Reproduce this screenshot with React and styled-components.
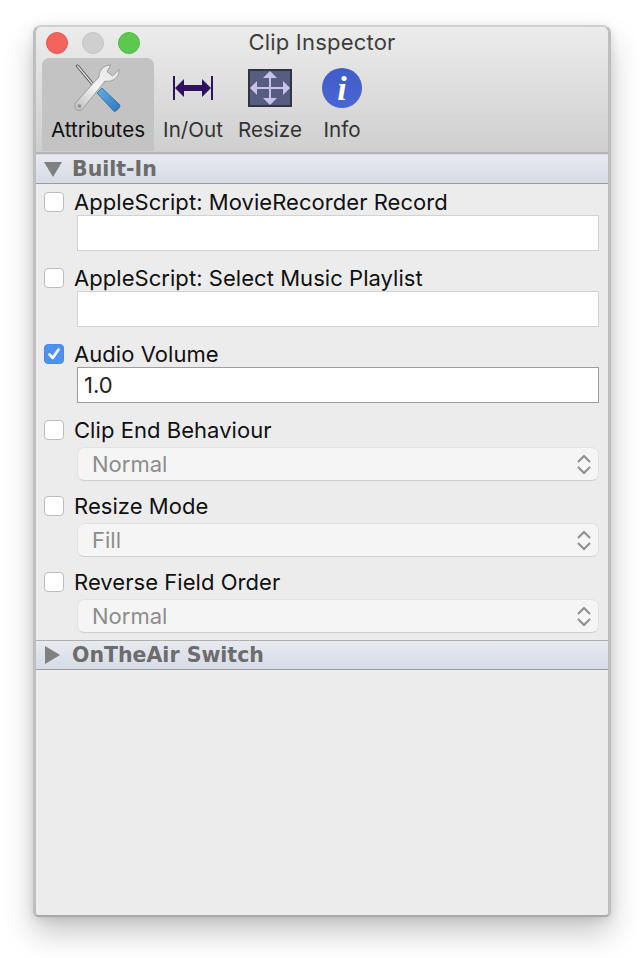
import React from 'react';
import styled, { createGlobalStyle } from 'styled-components';

const GlobalStyle = createGlobalStyle`
	html, body {
		margin: 0;
		padding: 0;
		background: #fff;
	}
`

const Page = styled.div`
	width: 644px;
	height: 958px;
	padding: 25px 33px 41px;
	box-sizing: border-box;
	font-family: Inter, "Liberation Sans", sans-serif;
	overflow: hidden;
`

const Window = styled.div`
	height: 100%;
	display: flex;
	flex-direction: column;
	box-sizing: border-box;
	background: #ececec;
	border: 3px solid #bebebe;
	border-top: 2px solid #d0d0d0;
	border-bottom: 2px solid #a8a8a8;
	border-radius: 8px 8px 5px 5px;
	box-shadow: 0 16px 30px rgba(0, 0, 0, 0.22), 0 2px 10px rgba(0, 0, 0, 0.1);
	overflow: hidden;
`

const Chrome = styled.div`
	height: 125px;
	flex: none;
	background: linear-gradient(#ececec, #cfcfcf);
	border-bottom: 2px solid #b4b4b4;
`

const TitleBar = styled.div`
	height: 31px;
	display: grid;
	grid-template-columns: 1fr auto 1fr;
	align-items: center;
	padding: 0 8px;
`

const Lights = styled.div`
	display: flex;
	gap: 14px;
	padding-left: 2px;
	padding-top: 1px;
`

const Light = styled.span`
	width: 22px;
	height: 22px;
	box-sizing: border-box;
	border-radius: 50%;
	background: ${props => props.color};
	border: 1px solid ${props => props.edge};
`

const Title = styled.div`
	font-size: 22px;
	letter-spacing: 0.2px;
	color: #3e3e3e;
	padding-bottom: 2px;
`

const Toolbar = styled.div`
	display: flex;
	padding-left: 6px;
`

const Tab = styled.div`
	width: ${props => props.size}px;
	height: 93px;
	padding-top: 6px;
	box-sizing: border-box;
	display: flex;
	flex-direction: column;
	align-items: center;
	border-radius: 7px 7px 0 0;
	background: ${props => props.active ? '#c3c3c3' : 'transparent'};
`

const TabIcon = styled.div`
	height: 48px;
	display: flex;
	align-items: center;
	justify-content: center;
`

const TabLabel = styled.div`
	margin-top: 5px;
	line-height: 26px;
	font-size: 20.6px;
	white-space: nowrap;
	color: ${props => props.active ? '#111' : '#333'};
`

const SectionHeader = styled.div`
	height: 30px;
	flex: none;
	box-sizing: border-box;
	display: flex;
	align-items: center;
	gap: 10px;
	padding-left: 8px;
	background: linear-gradient(#e8eaf0, #d6dbe6);
	border-top: 1px solid ${props => props.first ? '#d8dbe3' : '#b0b0b0'};
	border-bottom: 1px solid #9c9c9c;
	font-family: "DejaVu Sans", sans-serif;
	font-weight: bold;
	font-size: 20.5px;
	color: #6c6c6c;
`

const Rows = styled.div`
	padding-top: 5px;
`

const Row = styled.div`
	height: 76px;
	padding: 0 9px 0 9px;
	&:last-child {
		height: 71px;
	}
`

const RowLabel = styled.div`
	height: 26px;
	margin-left: -1px;
	display: flex;
	align-items: center;
	gap: 10px;
	font-size: 22px;
	letter-spacing: 0.05px;
	color: #111;
`

const Check = styled.span`
	width: 20px;
	height: 20px;
	flex: none;
	box-sizing: border-box;
	display: flex;
	align-items: center;
	justify-content: center;
	border-radius: 4px;
	background: ${props => props.checked ? '#4d92f2' : '#fff'};
	border: 1px solid ${props => props.checked ? '#4a8ae6' : '#bdbdbd'};
`

const TextField = styled.input`
	display: block;
	width: 522px;
	height: 36px;
	margin-left: 32px;
	padding: 0 6px;
	box-sizing: border-box;
	background: #fff;
	border: 1px solid ${props => props.filled ? '#9d9d9d' : '#d2d2d2'};
	outline: none;
	font-family: inherit;
	font-size: 22px;
	color: #222;
`

const SelectBox = styled.div`
	width: 522px;
	height: 34px;
	margin: 4px 0 0 32px;
	padding: 0 7px 0 14px;
	box-sizing: border-box;
	display: flex;
	align-items: center;
	justify-content: space-between;
	background: #f5f5f5;
	border: 1px solid #e2e2e2;
	border-bottom-color: #cfcfcf;
	border-radius: 7px;
	font-size: 22px;
	color: #8d8d8d;
`

const Tools = () => (
	<svg width="48" height="48" viewBox="0 0 48 48">
		<defs>
			<linearGradient id="steel" x1="0" y1="1" x2="1" y2="0">
				<stop offset="0" stopColor="#bdbdbd" />
				<stop offset="0.5" stopColor="#f4f4f4" />
				<stop offset="1" stopColor="#e2e2e2" />
			</linearGradient>
			<linearGradient id="grip" x1="0" y1="0" x2="1" y2="1">
				<stop offset="0" stopColor="#64aee6" />
				<stop offset="1" stopColor="#2f77b8" />
			</linearGradient>
		</defs>
		<path d="M3.500 2 L21 23" stroke="#4c4c4c" strokeWidth="3" strokeLinecap="round" />
		<path d="M3.500 2 L21 23" stroke="#e8e8e8" strokeWidth="1.200" strokeLinecap="round" />
		<path d="M23 29 L28 24 L46 41 C46 44 43 47 40 47.500 Z" fill="url(#grip)" stroke="#2e6ea8" strokeWidth="0.800" />
		<path
			d="M1.500 39 L19 19.500 L25 13 C25 8 28 3 33 1.500 L37 1 L33 7.500 L38.500 12 L45 5.500 C45.500 9 44 13 40 15.500 C37 17.500 34 17.500 31 17 L9 44.500 C7 47 3 47 1.500 44.500 C0.500 43 0.500 40.500 1.500 39 Z"
			fill="url(#steel)"
			stroke="#909090"
			strokeWidth="0.800"
		/>
		<circle cx="5.500" cy="42" r="1.800" fill="#8e8e8e" />
	</svg>
)

const InOut = () => (
	<svg width="40" height="24" viewBox="0 0 40 24" fill="#2f1160">
		<rect x="0" y="0" width="2" height="24" />
		<rect x="38" y="0" width="2" height="24" />
		<path d="M2 12 L11 3 V9 H29 V3 L38 12 L29 21 V15 H11 V21 Z" />
	</svg>
)

const Resize = () => (
	<svg width="44" height="38" viewBox="0 0 44 38">
		<rect x="1" y="1" width="42" height="36" fill="#565c82" stroke="#31353f" strokeWidth="2" />
		<g fill="#c9c2ea">
			<rect x="21" y="7" width="2" height="24" />
			<rect x="8" y="18" width="28" height="2" />
			<path d="M22 2 L29 9 H15 Z" />
			<path d="M22 36 L29 29 H15 Z" />
			<path d="M2 19 L9 12 V26 Z" />
			<path d="M42 19 L35 12 V26 Z" />
		</g>
	</svg>
)

const Info = () => (
	<svg width="42" height="42" viewBox="0 0 42 42">
		<defs>
			<linearGradient id="infoFill" x1="0" y1="0" x2="0" y2="1">
				<stop offset="0" stopColor="#3f5cc6" />
				<stop offset="1" stopColor="#4a66d6" />
			</linearGradient>
		</defs>
		<circle cx="21" cy="21" r="20" fill="url(#infoFill)" />
		<text x="21" y="33" textAnchor="middle" fill="#fff" fontFamily="Liberation Serif, serif" fontStyle="italic" fontWeight="bold" fontSize="34">i</text>
	</svg>
)

const Triangle = ({ open }) => (
	<svg width="18" height="18" viewBox="0 0 18 18" fill="#808080">
		{open ? <path d="M0 2 H18 L9 17 Z" /> : <path d="M1 0 L16 9 L1 18 Z" />}
	</svg>
)

const Tick = () => (
	<svg width="14" height="14" viewBox="0 0 14 14" fill="none" stroke="#fff" strokeWidth="2.600" strokeLinecap="round" strokeLinejoin="round">
		<path d="M2.500 7.500 L5.800 11 L11.500 2.500" />
	</svg>
)

const Stepper = () => (
	<svg width="14" height="21" viewBox="0 0 14 21" fill="none" stroke="#8e8e8e" strokeWidth="2">
		<path d="M1 8 L7 2 L13 8" />
		<path d="M1 13 L7 19 L13 13" />
	</svg>
)

const tabs = [
	{ label: 'Attributes', size: 112, icon: <Tools />, active: true },
	{ label: 'In/Out', size: 78, icon: <InOut /> },
	{ label: 'Resize', size: 76, icon: <Resize /> },
	{ label: 'Info', size: 68, icon: <Info /> },
]

const rows = [
	{ label: 'AppleScript: MovieRecorder Record', field: '' },
	{ label: 'AppleScript: Select Music Playlist', field: '' },
	{ label: 'Audio Volume', field: '1.0', checked: true },
	{ label: 'Clip End Behaviour', select: 'Normal' },
	{ label: 'Resize Mode', select: 'Fill' },
	{ label: 'Reverse Field Order', select: 'Normal' },
]

const App = () => (
	<Page>
		<GlobalStyle />
		<Window>
			<Chrome>
				<TitleBar>
					<Lights>
						<Light color="#f4645c" edge="#e0574f" />
						<Light color="#cfcfcf" edge="#c2c2c2" />
						<Light color="#5cc84f" edge="#52b546" />
					</Lights>
					<Title>Clip Inspector</Title>
				</TitleBar>
				<Toolbar>
					{tabs.map(tab => (
						<Tab key={tab.label} size={tab.size} active={tab.active}>
							<TabIcon>{tab.icon}</TabIcon>
							<TabLabel active={tab.active}>{tab.label}</TabLabel>
						</Tab>
					))}
				</Toolbar>
			</Chrome>
			<SectionHeader first>
				<Triangle open />
				Built-In
			</SectionHeader>
			<Rows>
				{rows.map(row => (
					<Row key={row.label}>
						<RowLabel>
							<Check checked={row.checked}>{row.checked && <Tick />}</Check>
							{row.label}
						</RowLabel>
						{row.select
							? <SelectBox>{row.select}<Stepper /></SelectBox>
							: <TextField readOnly value={row.field} filled={!!row.field} />}
					</Row>
				))}
			</Rows>
			<SectionHeader>
				<Triangle />
				OnTheAir Switch
			</SectionHeader>
		</Window>
	</Page>
)

export default App;
